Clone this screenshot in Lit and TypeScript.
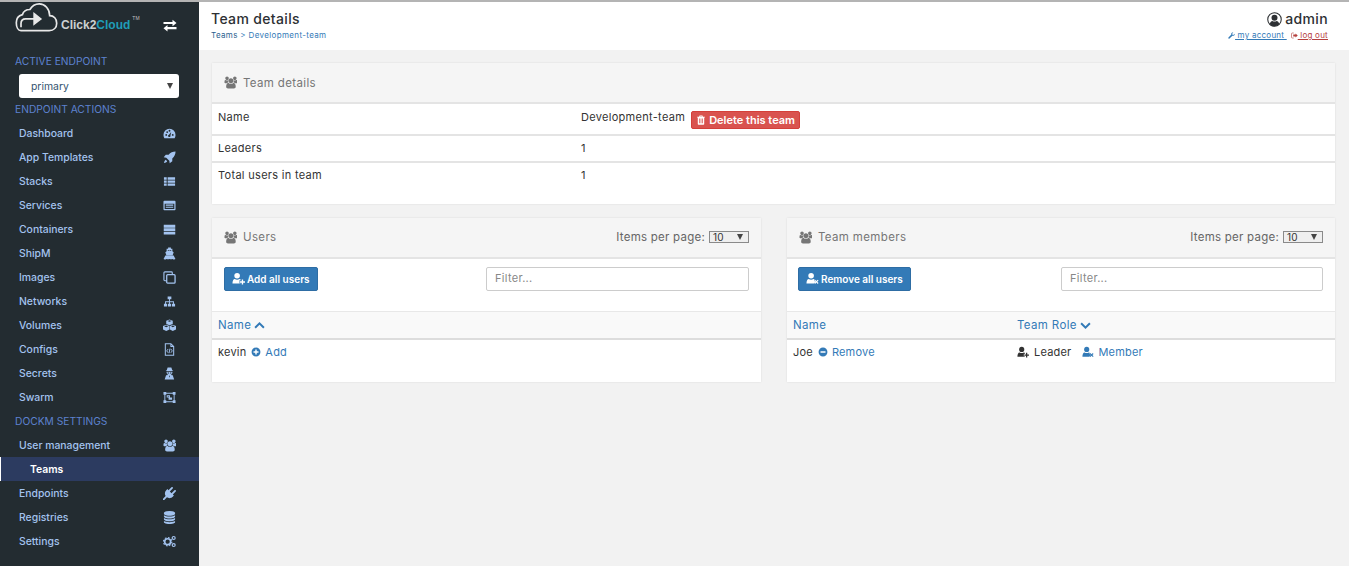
import { LitElement, html, css, svg } from "lit";
import { customElement } from "lit/decorators.js";

const USERS =
  "M657 896q-162 5-265 128h-134q-82 0-138-40.500t-56-118.500q0-353 124-353 6 0 43.500 21t97.500 42.500 119 21.500q67 0 133-23-5 37-5 66 0 139 81 256zm1071 637q0 120-73 189.500t-194 69.500h-874q-121 0-194-69.500t-73-189.500q0-53 3.500-103.500t14-109 26.500-108.500 43-97.500 62-81 85.500-53.500 111.500-20q10 0 43 21.500t73 48 107 48 135 21.500 135-21.500 107-48 73-48 43-21.500q61 0 111.500 20t85.500 53.500 62 81 43 97.500 26.500 108.500 14 109 3.500 103.500zm-1024-1277q0 106-75 181t-181 75-181-75-75-181 75-181 181-75 181 75 75 181zm704 384q0 159-112.500 271.500t-271.500 112.500-271.500-112.500-112.500-271.500 112.500-271.500 271.500-112.500 271.500 112.500 112.500 271.500zm576 225q0 78-56 118.500t-138 40.500h-134q-103-123-265-128 81-117 81-256 0-29-5-66 66 23 133 23 59 0 119-21.500t97.500-42.500 43.500-21q124 0 124 353zm-128-609q0 106-75 181t-181 75-181-75-75-181 75-181 181-75 181 75 75 181z";
const PLUG =
  "M1755 453q37 38 37 90.500t-37 90.500l-401 400 150 150-160 160q-163 163-389.500 186.500t-411.500-100.500l-362 362h-181v-181l362-362q-124-185-100.500-411.500t186.500-389.500l160-160 150 150 400-401q38-37 91-37t90 37 37 90.500-37 90.500l-400 401 234 234 401-400q38-37 91-37t90 37z";
const DATABASE =
  "M896 768q237 0 443-43t325-127v170q0 69-103 128t-280 93.500-385 34.500-385-34.500-280-93.500-103-128v-170q119 84 325 127t443 43zm0 768q237 0 443-43t325-127v170q0 69-103 128t-280 93.500-385 34.500-385-34.500-280-93.500-103-128v-170q119 84 325 127t443 43zm0-384q237 0 443-43t325-127v170q0 69-103 128t-280 93.500-385 34.500-385-34.500-280-93.500-103-128v-170q119 84 325 127t443 43zm0-1152q208 0 385 34.500t280 93.500 103 128v128q0 69-103 128t-280 93.500-385 34.500-385-34.500-280-93.500-103-128v-128q0-69 103-128t280-93.500 385-34.500z";

/** all icons share a 14x14 box, except the ones with a font-awesome path */
const ICONS: Record<string, unknown> = {
  dashboard: svg`<path fill-rule="evenodd" d="M7 2a6.500 6.500 0 0 0-6.500 6.500c0 1.300.4 2.500 1 3.500h11c.6-1 1-2.200 1-3.500A6.500 6.500 0 0 0 7 2zM6 4a1 1 0 1 0 2 0 1 1 0 0 0-2 0zM2.500 8.500a1 1 0 1 0 2 0 1 1 0 0 0-2 0zM3.500 5.500a1 1 0 1 0 2 0 1 1 0 0 0-2 0zM9.500 8.500a1 1 0 1 0 2 0 1 1 0 0 0-2 0zM8.800 5.500 6.500 8.300a1.300 1.300 0 1 0 1.500 1z"/>`,
  rocket: svg`<path d="M13.500.5c-3 0-5.500 1.200-7.500 3.500H3L.8 6.800l2.700.4 3.300 3.300.4 2.700L10 11V8c2.300-2 3.500-4.500 3.500-7.500zM3 9.500c-1 .6-1.700 1.800-2 3.500 1.700-.3 2.900-1 3.500-2z"/>`,
  list: svg`<path d="M1 2.500h3v2.500H1zM5 2.500h8v2.500H5zM1 5.800h3v2.500H1zM5 5.800h8v2.500H5zM1 9.100h3v2.500H1zM5 9.100h8v2.500H5z"/>`,
  services: svg`<path fill-rule="evenodd" d="M1.500 2h11a1 1 0 0 1 1 1v8a1 1 0 0 1-1 1h-11a1 1 0 0 1-1-1V3a1 1 0 0 1 1-1zM1.800 5v5.800h10.400V5zM3 6h8v1.200H3zM3 8.300h8v1.200H3z"/>`,
  server: svg`<path d="M.8 2h12.400v3H.8zM.8 5.700h12.400v3H.8zM.8 9.400h12.400v3H.8z"/>`,
  ship: svg`<path d="M5.500.5h3v1.500h1.600v2.700l1.400.9-1.100 3.200H3.600L2.500 5.600l1.400-.9V2h1.600zM5.200 3.200v1l1.800-.7 1.800.7v-1zM.6 13l1.900-3.800h9l1.900 3.800c-1 .6-1.900.4-3.200-.2-1.100.6-2 .6-3.200 0-1.200.6-2.100.6-3.200 0-1.300.6-2.200.8-3.200.2z"/>`,
  clone: svg`<path fill="none" stroke="currentColor" stroke-width="1.200" d="M4 10.500H2a1 1 0 0 1-1-1V2a1 1 0 0 1 1-1h7a1 1 0 0 1 1 1v2"/><rect x="4" y="4" width="9" height="9" rx="1" fill="none" stroke="currentColor" stroke-width="1.400"/>`,
  sitemap: svg`<path d="M5 1.500h4v3.200H5zM1 9.300h3.400v3.200H1zM5.300 9.300h3.400v3.200H5.300zM9.600 9.300H13v3.200H9.600zM6.500 4.700h1v2h4.300v2.600h-1V7.700H7.500v1.600h-1V7.700H3.200v1.600h-1V6.700h4.300z"/>`,
  cubes: svg`<path fill-rule="evenodd" d="M7 .5 10.500 1.800v3.500L7 6.800 3.500 5.300V1.800zM4.800 2.100 7 3l2.200-.9L7 1.300z"/><path fill-rule="evenodd" d="M3.500 6.300 7 7.600v3.600l-3.500 1.600L0 11.200V7.600zM1.300 7.900l2.200.9 2.200-.9-2.200-.8zM10.500 6.300 14 7.600v3.600l-3.500 1.600L7.500 11.200V7.600zM8.800 7.900l1.700.9 2.200-.9-2.200-.8z"/>`,
  file: svg`<path fill="none" stroke="currentColor" stroke-width="1.100" d="M2.500.8h6l3 3v9.400h-9zM8.500.8v3h3"/><path fill="none" stroke="currentColor" stroke-width="1" d="M5.500 6.500 4 8.500l1.500 2M8.500 6.500l1.500 2-1.500 2M7.500 6 6.500 11"/>`,
  secret: svg`<path fill-rule="evenodd" d="M5 .6h4l1 3 1.200.7H2.800L4 3.600zM3.800 5h6.400c0 1.800-.9 3.100-1.900 3.500l2.200.3 1.500 4.700H1.800l1.500-4.700 2.400-.3C4.700 8.100 3.800 6.800 3.800 5zM5 6v1h1.500V6zM7.500 6v1H9V6zM6.400 9.300 7 11.500l.6-2.200z"/>`,
  group: svg`<path fill-rule="evenodd" d="M.5 1h3v1h7V1h3v3h-1v6h1v3h-3v-1h-7v1h-3v-3h1V4h-1zM3.500 3v1h-1v6h1v1h7v-1h1V4h-1V3zM4 4.500h3.500V7H9.800v2.500H6V7H4zM5 5.500V6h1.500v-.5z"/>`,
  cogs: svg`<circle cx="5" cy="7.200" r="3.200" fill="none" stroke="currentColor" stroke-width="1.800"/><circle cx="5" cy="7.200" r="4.500" fill="none" stroke="currentColor" stroke-width="1.200" stroke-dasharray="1.800 1.700"/><circle cx="11.500" cy="3.200" r="1.600" fill="none" stroke="currentColor" stroke-width="1.300"/><circle cx="11.500" cy="10.800" r="1.600" fill="none" stroke="currentColor" stroke-width="1.300"/>`,
  trash: svg`<path fill-rule="evenodd" d="M5 .8h4l.7 1.500h2.800v1.200h-1v9a1 1 0 0 1-1 1h-7a1 1 0 0 1-1-1v-9h-1V2.300h2.800zM6 2.300h2l-.3-.5H6.300zM4.500 5v6.500h1V5zM6.500 5v6.500h1V5zM8.500 5v6.500h1V5z"/>`,
  userPlus: svg`<circle cx="5.500" cy="4" r="3"/><path d="M.5 12.500c0-3 1-5 2.500-5 1.500 1 3.500 1 5 0 .6 0 1 .2 1.400.6V9H8v3h1.400v.5zM10.500 8h1.500v2h2v1.500h-2v2h-1.500v-2h-2V10h2z"/>`,
  userTimes: svg`<circle cx="5.500" cy="4" r="3"/><path d="M.5 12.500c0-3 1-5 2.500-5 1.500 1 3.500 1 5 0 .6 0 1 .2 1.400.6L8.500 9l1.400 1.500-1.400 2zM9.800 8.300l1.400 1.300 1.400-1.300.9.900-1.400 1.300 1.400 1.400-.9.900-1.400-1.400-1.400 1.400-.9-.9 1.400-1.400-1.400-1.300z"/>`,
  plusCircle: svg`<path fill-rule="evenodd" d="M7 .8a6.200 6.200 0 1 0 0 12.400A6.200 6.200 0 0 0 7 .8zM6 3.500h2V6h2.500v2H8v2.500H6V8H3.500V6H6z"/>`,
  minusCircle: svg`<path fill-rule="evenodd" d="M7 .8a6.200 6.200 0 1 0 0 12.400A6.200 6.200 0 0 0 7 .8zM3.500 6h7v2h-7z"/>`,
  chevronUp: svg`<path d="M7 2.500 13.500 9l-1.800 1.800L7 6.200l-4.700 4.600L.5 9z"/>`,
  chevronDown: svg`<path d="M7 11.500.5 5l1.800-1.800L7 7.800l4.700-4.600L13.500 5z"/>`,
  wrench: svg`<path d="M13.200 3.500 10.800 5.900 8.900 5.300 8.300 3.400 10.700 1C8.800.3 7 1.300 6.500 3c-.2.800-.1 1.500.2 2.200L.9 11a1.500 1.500 0 0 0 2.100 2.100l5.800-5.800c.7.300 1.400.4 2.200.2 1.800-.6 2.800-2.300 2.200-4z"/>`,
  signOut: svg`<path fill="none" stroke="currentColor" stroke-width="1.200" d="M5.500 2h-3a1.500 1.500 0 0 0-1.500 1.500v7A1.500 1.500 0 0 0 2.500 12h3"/><path d="M9 2.800 13.500 7 9 11.200V8.800H4.500V5.200H9z"/>`,
  userCircle: svg`<circle cx="7" cy="7" r="6.300" fill="none" stroke="currentColor" stroke-width="1"/><circle cx="7" cy="5.300" r="2.800"/><path d="M2.500 11.300c.5-2 1.500-3 2.500-3 1.200.8 2.800.8 4 0 1 0 2 1 2.500 3C10.500 12.600 9 13.300 7 13.300s-3.500-.7-4.500-2z"/>`,
  exchange: svg`<path d="M.5 3h9V.8L13.500 4 9.500 7.200V5H.5zM13.500 8H4.500V6L.5 9.200l4 3.200V10.300h9z"/>`,
};

function icon(name: string, size = 14) {
  const fa: Record<string, [string, string]> = {
    users: ["0 0 1920 1792", USERS],
    plug: ["0 0 1792 1792", PLUG],
    database: ["0 0 1792 1792", DATABASE],
  };
  if (fa[name]) {
    return html`<svg class="icon" width=${size} height=${size} viewBox=${fa[name][0]} fill="currentColor"><path d=${fa[name][1]} /></svg>`;
  }
  return html`<svg class="icon" width=${size} height=${size} viewBox="0 0 14 14" fill="currentColor">${ICONS[name]}</svg>`;
}

const ENDPOINT_ITEMS = [
  ["Dashboard", "dashboard"],
  ["App Templates", "rocket"],
  ["Stacks", "list"],
  ["Services", "services"],
  ["Containers", "server"],
  ["ShipM", "ship"],
  ["Images", "clone"],
  ["Networks", "sitemap"],
  ["Volumes", "cubes"],
  ["Configs", "file"],
  ["Secrets", "secret"],
  ["Swarm", "group"],
];

const SETTINGS_ITEMS = [
  ["Endpoints", "plug"],
  ["Registries", "database"],
  ["Settings", "cogs"],
];

@customElement("app-root")
export class AppRoot extends LitElement {
  static override styles = css`
    :host {
      display: block;
      height: 566px;
      overflow: hidden;
      font-family: Inter, "Liberation Sans", sans-serif;
      font-size: 11px;
      letter-spacing: 0.3px;
      color: #333;
    }
    .icon {
      display: block;
      flex: none;
    }
    .page {
      display: flex;
      height: 564px;
      border-top: 2px solid #b4b4b4;
      background: #f2f2f2;
    }

    /* sidebar */
    .side {
      width: 199px;
      flex: none;
      background: #232c31;
      color: #a3c3ef;
      font-size: 10.400px;
      font-weight: 500;
      letter-spacing: 0;
    }
    .brand {
      height: 47px;
      display: flex;
      align-items: flex-start;
      padding: 0 22px 0 15px;
    }
    .logo-text {
      font-family: "Liberation Sans", sans-serif;
      font-weight: 700;
      font-size: 12px;
      letter-spacing: 0;
      color: #cdd1d1;
      margin: 16px 0 0 3px;
    }
    .logo-text b {
      color: #1f9db8;
    }
    .logo-text sup {
      font-size: 5px;
      font-weight: 400;
      color: #c0c0c0;
      vertical-align: 9px;
      line-height: 0;
      margin-left: 2px;
    }
    .swap {
      color: #fff;
      margin: 17px 0 0 auto;
    }
    .section {
      height: 24px;
      line-height: 24px;
      padding-left: 15px;
      color: #5d82cf;
      font-size: 10.250px;
      font-weight: 400;
      text-transform: uppercase;
    }
    .picker {
      margin: 1px 20px -1px 19px;
      height: 24px;
      box-sizing: border-box;
      background: #fff;
      border-radius: 3px;
      color: #33536f;
      font-weight: 400;
      display: flex;
      align-items: center;
      justify-content: space-between;
      padding: 0 6px 0 12px;
    }
    .caret {
      width: 0;
      height: 0;
      border-left: 3px solid transparent;
      border-right: 3px solid transparent;
      border-top: 6px solid #444;
    }
    .item {
      height: 24px;
      display: flex;
      align-items: center;
      justify-content: space-between;
      padding: 0 23px 0 19px;
    }
    .item.sub {
      background: #2c3b60;
      border-left: 1px solid #fff;
      padding-left: 29px;
      color: #fff;
      font-weight: 600;
    }

    /* main column */
    .main {
      flex: 1;
      min-width: 0;
    }
    .top {
      height: 48px;
      background: #fff;
      display: flex;
      justify-content: space-between;
      padding: 0 21px 0 12px;
    }
    .title {
      font-size: 14px;
      font-weight: 500;
      letter-spacing: 0.35px;
      color: #2d3033;
      margin-top: 9px;
      line-height: 16px;
    }
    .crumb {
      font-size: 8px;
      letter-spacing: 0.35px;
      color: #337ab7;
      margin-top: 3px;
      line-height: 10px;
    }
    .crumb span {
      color: #2a5f8f;
    }
    .account {
      display: flex;
      flex-direction: column;
      align-items: flex-end;
    }
    .who {
      display: flex;
      align-items: center;
      gap: 3px;
      font-size: 14px;
      font-weight: 500;
      letter-spacing: 0.35px;
      color: #2d3033;
      margin-top: 9px;
      line-height: 16px;
    }
    .links {
      display: flex;
      gap: 4px;
      font-size: 8px;
      letter-spacing: 0.25px;
      margin-top: 3px;
      line-height: 10px;
    }
    .links a {
      display: flex;
      align-items: center;
      color: #337ab7;
      text-decoration: underline;
      white-space: pre;
    }
    .links a.out {
      color: #b5413e;
    }
    .content {
      padding: 13px 14px 0 13px;
      display: flex;
      flex-direction: column;
      gap: 14px;
    }
    .card {
      background: #fff;
      box-shadow: 0 0 2px rgba(0, 0, 0, 0.1);
    }
    .head {
      height: 41px;
      background: #f5f5f5;
      border-bottom: 2px solid #e4e4e4;
      box-sizing: border-box;
      display: flex;
      align-items: center;
      justify-content: space-between;
      padding: 0 12px;
      color: #767676;
      font-size: 11.500px;
      letter-spacing: 0.35px;
    }
    .cols .head {
      padding-bottom: 1px;
    }
    .head-title {
      display: flex;
      align-items: center;
      gap: 6px;
    }
    .per-page {
      display: flex;
      align-items: center;
      gap: 4px;
      color: #666;
      letter-spacing: 0.25px;
    }
    .mini {
      width: 40px;
      height: 12px;
      box-sizing: border-box;
      background: #efefef;
      border: 1px solid #8a8a8a;
      display: flex;
      align-items: center;
      justify-content: space-between;
      padding: 0 5px 0 3px;
      font-size: 10px;
      color: #333;
    }
    .detail-table {
      padding-bottom: 15px;
    }
    .row {
      display: flex;
      border-bottom: 2px solid #e4e4e4;
      padding-left: 6px;
    }
    .row:last-child {
      border-bottom: 0;
    }
    .row .key {
      width: 363px;
      flex: none;
    }
    .row .val {
      display: flex;
      align-items: flex-start;
      gap: 6px;
    }
    .row.r1 {
      height: 24px;
      padding-top: 6px;
    }
    .row.r2 {
      height: 20px;
      padding-top: 5px;
    }
    .row.r3 {
      height: 21px;
      padding-top: 5px;
    }
    .del {
      display: flex;
      align-items: center;
      gap: 3px;
      height: 18px;
      margin-top: 0.5px;
      padding: 0 4px;
      background: #d9534f;
      border: 1px solid #d43f3a;
      border-radius: 2px;
      box-sizing: border-box;
      color: #fff;
      font-weight: 600;
      letter-spacing: 0;
    }
    .cols {
      display: grid;
      grid-template-columns: 549px 548px;
      gap: 26px;
    }
    .bar {
      height: 53px;
      box-sizing: border-box;
      padding: 8px 12px 0;
      background: #fff;
      border-bottom: 1px solid #e8e8e8;
      display: flex;
      justify-content: space-between;
    }
    .bar.tight {
      padding-left: 11px;
    }
    .btn {
      height: 24px;
      display: flex;
      align-items: center;
      gap: 2px;
      padding: 0 7px 1px;
      box-sizing: border-box;
      background: #337ab7;
      border: 1px solid #2e6da4;
      border-radius: 2px;
      color: #fff;
      font-size: 10px;
      font-weight: 600;
      letter-spacing: 0;
    }
    .filter {
      width: 263px;
      height: 24px;
      box-sizing: border-box;
      background: #fff;
      border: 1px solid #ccc;
      border-radius: 2px;
      color: #888;
      padding-left: 8px;
      line-height: 21px;
    }
    .bar.tight .filter {
      width: 262px;
    }
    .th {
      height: 28px;
      background: #f9f9f9;
      border-bottom: 2px solid #ddd;
      box-sizing: border-box;
      display: grid;
      grid-template-columns: 224px 1fr;
      align-items: center;
      padding-left: 6px;
      color: #337ab7;
      font-size: 11.500px;
      letter-spacing: 0.35px;
    }
    .tr {
      height: 42px;
      padding: 5px 0 0 6px;
      box-sizing: border-box;
      display: grid;
      grid-template-columns: 224px 1fr;
      align-items: start;
      letter-spacing: 0.2px;
    }
    .cell {
      display: flex;
      align-items: center;
      gap: 5px;
      line-height: 14px;
    }
    .th .cell {
      gap: 3px;
    }
    .link {
      color: #337ab7;
      display: flex;
      align-items: center;
      gap: 4px;
    }
    .link.gap {
      margin-left: 6px;
    }
  `;

  private _renderLogo() {
    return html`<svg width="43" height="31" viewBox="0 0 45 33" fill="none" stroke="#e8e8e8" stroke-width="1.800">
      <path d="M6 31.500h30c5 0 8-3.500 8-8s-3-8-7.500-8c0-7-5-12.500-11-12.500-4.500 0-8 2.500-10 6-4 0-7 2-8 5.500-4 1-6.500 4-6.500 8.500 0 5 2 8.500 5 8.500z" transform="translate(0 -1)" />
      <path d="M6 27v-4c0-3 2-5 5-5h10" />
      <path d="M20 12.500l7 5.500-7 5.500z" fill="#e8e8e8" />
    </svg>`;
  }

  private _renderItem(label: string, name: string) {
    return html`<div class="item"><span>${label}</span>${icon(name, 13)}</div>`;
  }

  private _renderHead(title: string, perPage: boolean) {
    return html`<div class="head">
      <div class="head-title">${icon("users", 13)}<span>${title}</span></div>
      ${perPage
        ? html`<div class="per-page">
            Items per page:
            <div class="mini"><span>10</span><span class="caret"></span></div>
          </div>`
        : null}
    </div>`;
  }

  override render() {
    return html`<div class="page">
      <aside class="side">
        <div class="brand">
          ${this._renderLogo()}
          <div class="logo-text">Click2<b>Cloud</b><sup>TM</sup></div>
          <div class="swap">${icon("exchange", 14)}</div>
        </div>
        <div class="section">Active endpoint</div>
        <div class="picker"><span>primary</span><span class="caret"></span></div>
        <div class="section">Endpoint actions</div>
        ${ENDPOINT_ITEMS.map(([l, n]) => this._renderItem(l, n))}
        <div class="section">Dockm settings</div>
        ${this._renderItem("User management", "users")}
        <div class="item sub">Teams</div>
        ${SETTINGS_ITEMS.map(([l, n]) => this._renderItem(l, n))}
      </aside>
      <main class="main">
        <header class="top">
          <div>
            <div class="title">Team details</div>
            <div class="crumb"><span>Teams</span> &gt; Development-team</div>
          </div>
          <div class="account">
            <div class="who">${icon("userCircle", 15)}admin</div>
            <div class="links">
              <a>${icon("wrench", 7)} my account </a>
              <a class="out">${icon("signOut", 7)} log out</a>
            </div>
          </div>
        </header>
        <div class="content">
          <section class="card">
            ${this._renderHead("Team details", false)}
            <div class="detail-table">
              <div class="row r1">
                <div class="key">Name</div>
                <div class="val">
                  <span>Development-team</span>
                  <div class="del">${icon("trash", 10)}Delete this team</div>
                </div>
              </div>
              <div class="row r2"><div class="key">Leaders</div><div class="val">1</div></div>
              <div class="row r3"><div class="key">Total users in team</div><div class="val">1</div></div>
            </div>
          </section>
          <div class="cols">
            <section class="card">
              ${this._renderHead("Users", true)}
              <div class="bar">
                <div class="btn">${icon("userPlus", 13)}Add all users</div>
                <div class="filter">Filter...</div>
              </div>
              <div class="th"><div class="cell">Name ${icon("chevronUp", 11)}</div></div>
              <div class="tr">
                <div class="cell">
                  kevin
                  <span class="link">${icon("plusCircle", 10)}Add</span>
                </div>
              </div>
            </section>
            <section class="card">
              ${this._renderHead("Team members", true)}
              <div class="bar tight">
                <div class="btn">${icon("userTimes", 13)}Remove all users</div>
                <div class="filter">Filter...</div>
              </div>
              <div class="th">
                <div class="cell">Name</div>
                <div class="cell">Team Role ${icon("chevronDown", 11)}</div>
              </div>
              <div class="tr">
                <div class="cell">
                  Joe
                  <span class="link">${icon("minusCircle", 10)}Remove</span>
                </div>
                <div class="cell">
                  ${icon("userPlus", 12)} Leader
                  <span class="link gap">${icon("userTimes", 12)}Member</span>
                </div>
              </div>
            </section>
          </div>
        </div>
      </main>
    </div>`;
  }
}
